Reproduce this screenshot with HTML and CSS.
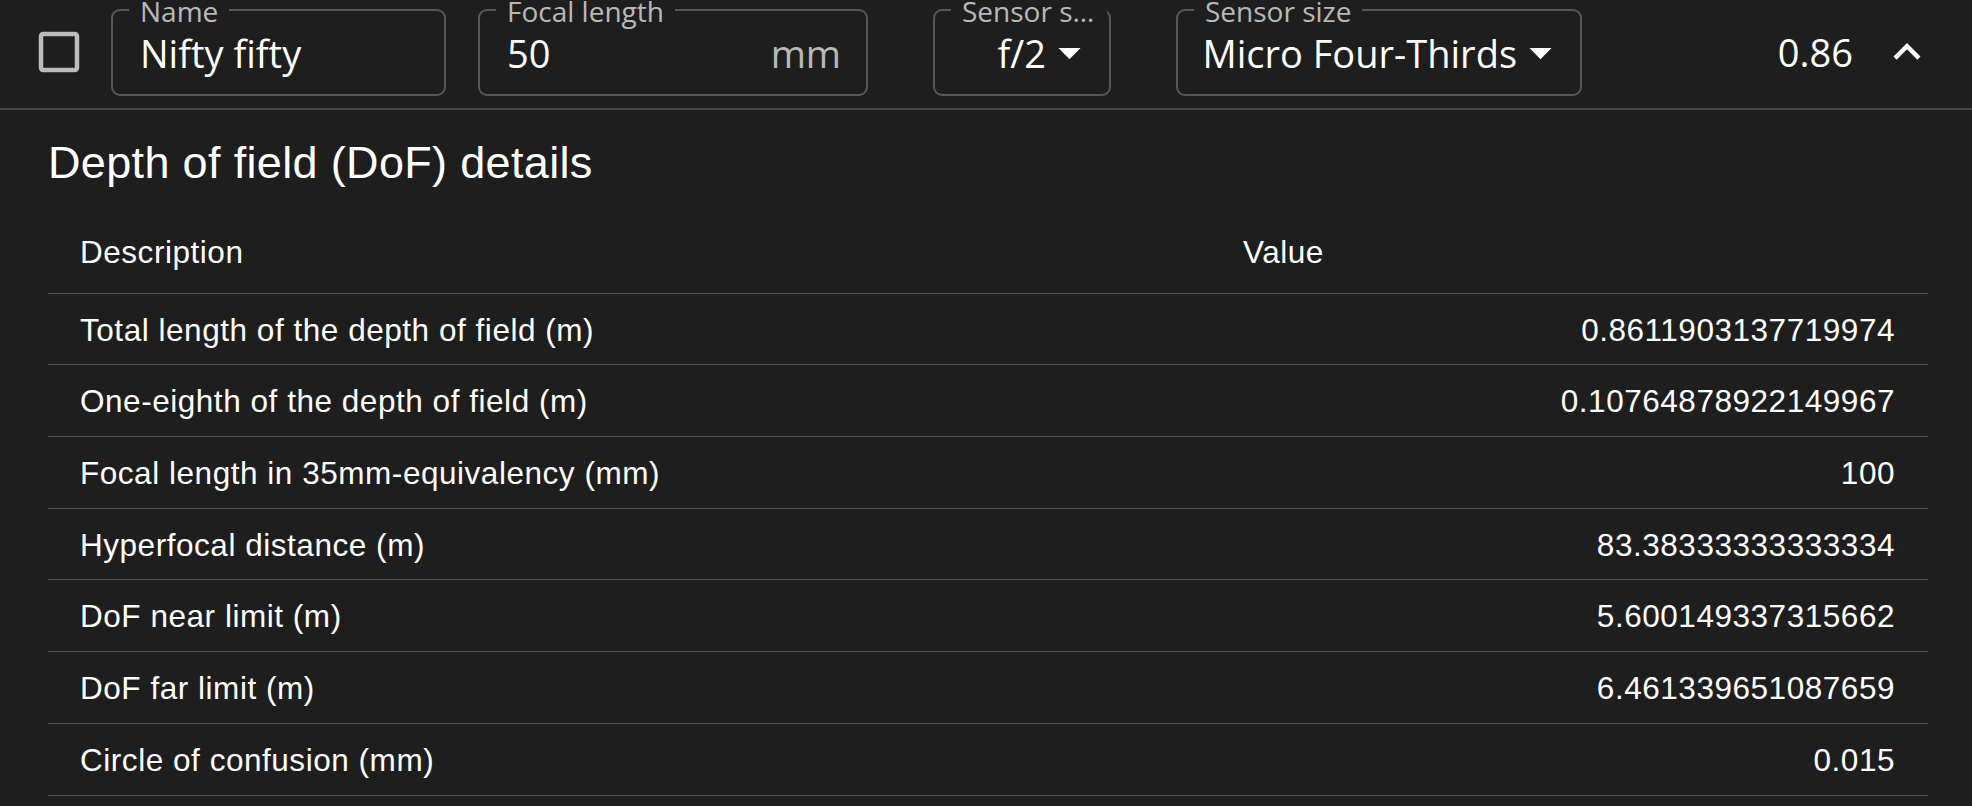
FILE: index.html
```html
<!DOCTYPE html>
<html lang="en">
<head>
    <meta charset="UTF-8">
    <meta name="viewport" content="width=device-width, initial-scale=1.0">
    <title>Lens details</title>
    <link rel="stylesheet" href="styles.css">
</head>
<body>

    <div class="lens-row">
        <svg class="checkbox" viewBox="0 0 24 24"><path d="M19 5v14H5V5h14m0-2H5c-1.11 0-2 .9-2 2v14c0 1.1.89 2 2 2h14c1.1 0 2-.9 2-2V5c0-1.1-.9-2-2-2z"/></svg>

        <div class="field field-name">
            <span class="label">Name</span>
            <span class="value">Nifty fifty</span>
        </div>

        <div class="field field-focal">
            <span class="label">Focal length</span>
            <span class="value">50</span>
            <span class="unit">mm</span>
        </div>

        <div class="field field-select field-aperture">
            <span class="label">Sensor size</span>
            <span class="value">f/2</span>
            <svg class="arrow" viewBox="0 0 24 24"><path d="M7 10l5 5 5-5z"/></svg>
        </div>

        <div class="field field-select field-sensor">
            <span class="label">Sensor size</span>
            <span class="value">Micro Four-Thirds</span>
            <svg class="arrow" viewBox="0 0 24 24"><path d="M7 10l5 5 5-5z"/></svg>
        </div>

        <span class="dof">0.86</span>
        <svg class="expand" viewBox="0 0 24 24"><path d="M12 8l-6 6 1.41 1.41L12 10.83l4.59 4.58L18 14z"/></svg>
    </div>

    <div class="details">
        <h2>Depth of field (DoF) details</h2>

        <table>
            <colgroup>
                <col class="col-desc">
                <col>
            </colgroup>
            <thead>
                <tr>
                    <th>Description</th>
                    <th>Value</th>
                </tr>
            </thead>
            <tbody>
                <tr><td>Total length of the depth of field (m)</td><td class="num">0.8611903137719974</td></tr>
                <tr><td>One-eighth of the depth of field (m)</td><td class="num">0.10764878922149967</td></tr>
                <tr><td>Focal length in 35mm-equivalency (mm)</td><td class="num">100</td></tr>
                <tr><td>Hyperfocal distance (m)</td><td class="num">83.38333333333334</td></tr>
                <tr><td>DoF near limit (m)</td><td class="num">5.600149337315662</td></tr>
                <tr><td>DoF far limit (m)</td><td class="num">6.461339651087659</td></tr>
                <tr><td>Circle of confusion (mm)</td><td class="num">0.015</td></tr>
            </tbody>
        </table>
    </div>

</body>
</html>
```

FILE: styles.css
```css
body {
    margin: 0;
    background-color: #1e1e1e;
    color: #fff;
    font-family: "Open Sans", "Noto Sans", sans-serif;
}
.lens-row {
    display: flex;
    align-items: flex-start;
    height: 108px;
    padding-left: 32px;
    border-bottom: 2px solid #474747;
}
.checkbox {
    width: 54px;
    height: 54px;
    margin-top: 25px;
    margin-right: 25px;
    fill: rgba(255, 255, 255, 0.7);
}
.field {
    position: relative;
    box-sizing: border-box;
    display: flex;
    align-items: center;
    height: 87px;
    margin-top: 9px;
    padding: 0 27px;
    border: 2px solid #585858;
    border-radius: 9px;
}
.field-name {
    width: 335px;
}
.field-focal {
    width: 390px;
    margin-left: 32px;
    padding-right: 25px;
}
.field-aperture {
    width: 178px;
    margin-left: 65px;
}
.field-sensor {
    width: 406px;
    margin-left: 65px;
}
.field-select {
    justify-content: flex-end;
    padding-right: 63px;
}
.label {
    position: absolute;
    left: 16px;
    top: -11px;
    max-width: calc(100% - 40px);
    padding: 0 11px 8px;
    background: #1e1e1e;
    color: rgba(255, 255, 255, 0.7);
    font-size: 28px;
    line-height: 22px;
    white-space: nowrap;
    overflow: hidden;
    text-overflow: ellipsis;
}
.value {
    font-size: 38px;
    white-space: nowrap;
}
.unit {
    margin-left: auto;
    font-size: 38px;
    color: rgba(255, 255, 255, 0.7);
}
.arrow {
    position: absolute;
    right: 13px;
    top: 15px;
    width: 53px;
    height: 53px;
    fill: #fff;
}
.dof {
    margin-left: auto;
    margin-top: 25.5px;
    font-size: 38px;
}
.expand {
    width: 54px;
    height: 54px;
    margin-top: 25px;
    margin-left: 27px;
    margin-right: 38px;
    fill: #fff;
}
.details {
    padding: 0 44px 0 48px;
    font-family: "Liberation Sans", Arial, sans-serif;
}
h2 {
    margin: 26px 0 26px;
    font-size: 45px;
    font-weight: 400;
    line-height: 54px;
    letter-spacing: 0.0075em;
}
table {
    width: 100%;
    border-collapse: collapse;
    table-layout: fixed;
    font-size: 31.5px;
    letter-spacing: 0.017em;
}
.col-desc {
    width: 1163px;
}
th, td {
    padding: 14.85px 32px 12.85px;
    line-height: 43px;
    border-bottom: 1px solid #515151;
    text-align: left;
    font-weight: 400;
    white-space: nowrap;
}
th {
    padding-top: 15px;
    padding-bottom: 18.7px;
}
td.num {
    text-align: right;
    padding-right: 33px;
}
```
